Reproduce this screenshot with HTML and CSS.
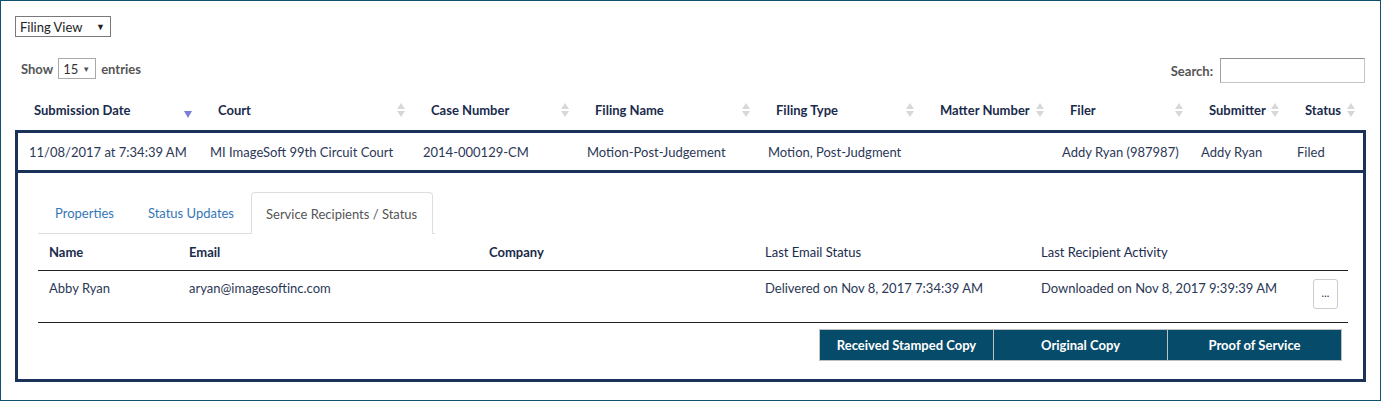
FILE: index.html
```html
<!DOCTYPE html>
<html>
<head>
<meta charset="utf-8">
<link rel="stylesheet" href="styles.css">
</head>
<body>
<div class="page">
  <div class="view-select">
    <span>Filing View</span>
    <span class="caret">&#9660;</span>
  </div>

  <div class="controls">
    <div class="length">
      <span>Show</span>
      <div class="len-select"><span>15</span><span class="caret small">&#9660;</span></div>
      <span>entries</span>
    </div>
    <div class="search">
      <span>Search:</span>
      <div class="search-input"></div>
    </div>
  </div>

  <div class="grid head">
    <div class="hc first"><span>Submission Date</span><svg class="sort-active" width="8" height="7" viewBox="0 0 8 7"><polygon points="0,0 8,0 4,7" fill="#7b7fd8"/></svg></div>
    <div class="hc"><span>Court</span><svg class="sort" width="8" height="14" viewBox="0 0 8 14"><polygon points="0,6 4,0 8,6" /><polygon points="0,8 8,8 4,14"/></svg></div>
    <div class="hc"><span>Case Number</span><svg class="sort" width="8" height="14" viewBox="0 0 8 14"><polygon points="0,6 4,0 8,6" /><polygon points="0,8 8,8 4,14"/></svg></div>
    <div class="hc"><span>Filing Name</span><svg class="sort" width="8" height="14" viewBox="0 0 8 14"><polygon points="0,6 4,0 8,6" /><polygon points="0,8 8,8 4,14"/></svg></div>
    <div class="hc"><span>Filing Type</span><svg class="sort" width="8" height="14" viewBox="0 0 8 14"><polygon points="0,6 4,0 8,6" /><polygon points="0,8 8,8 4,14"/></svg></div>
    <div class="hc"><span>Matter Number</span><svg class="sort" width="8" height="14" viewBox="0 0 8 14"><polygon points="0,6 4,0 8,6" /><polygon points="0,8 8,8 4,14"/></svg></div>
    <div class="hc"><span>Filer</span><svg class="sort" width="8" height="14" viewBox="0 0 8 14"><polygon points="0,6 4,0 8,6" /><polygon points="0,8 8,8 4,14"/></svg></div>
    <div class="hc"><span>Submitter</span><svg class="sort" width="8" height="14" viewBox="0 0 8 14"><polygon points="0,6 4,0 8,6" /><polygon points="0,8 8,8 4,14"/></svg></div>
    <div class="hc"><span>Status</span><svg class="sort" width="8" height="14" viewBox="0 0 8 14"><polygon points="0,6 4,0 8,6" /><polygon points="0,8 8,8 4,14"/></svg></div>
  </div>

  <div class="box">
    <div class="grid row">
      <div class="dc first">11/08/2017 at 7:34:39 AM</div>
      <div class="dc">MI ImageSoft 99th Circuit Court</div>
      <div class="dc">2014-000129-CM</div>
      <div class="dc">Motion-Post-Judgement</div>
      <div class="dc">Motion, Post-Judgment</div>
      <div class="dc"></div>
      <div class="dc">Addy Ryan (987987)</div>
      <div class="dc">Addy Ryan</div>
      <div class="dc">Filed</div>
    </div>

    <div class="detail">
      <div class="tabs">
        <div class="tab">Properties</div>
        <div class="tab">Status Updates</div>
        <div class="tab active">Service Recipients / Status</div>
      </div>

      <div class="rgrid rhead">
        <div class="rc b">Name</div>
        <div class="rc b">Email</div>
        <div class="rc b">Company</div>
        <div class="rc">Last Email Status</div>
        <div class="rc">Last Recipient Activity</div>
        <div class="rc"></div>
      </div>
      <div class="rgrid rrow">
        <div class="rc">Abby Ryan</div>
        <div class="rc">aryan@imagesoftinc.com</div>
        <div class="rc"></div>
        <div class="rc">Delivered on Nov 8, 2017 7:34:39 AM</div>
        <div class="rc">Downloaded on Nov 8, 2017 9:39:39 AM</div>
        <div class="rc"><div class="more">...</div></div>
      </div>

      <div class="actions">
        <div class="btn">Received Stamped Copy</div>
        <div class="btn">Original Copy</div>
        <div class="btn">Proof of Service</div>
      </div>
    </div>
  </div>
</div>
</body>
</html>
```

FILE: styles.css
```css
* { box-sizing: border-box; }
html, body { margin: 0; padding: 0; background: #fff; }
body {
  font-family: "Lato", "Open Sans", sans-serif;
  font-size: 13px;
  color: #2b3856;
}
.page {
  width: 1381px;
  height: 401px;
  border: 1px solid #0e5270;
  padding: 15px 0 0 14px;
}
.view-select {
  width: 96px;
  height: 21px;
  border: 1px solid #7a7a7a;
  display: flex;
  align-items: center;
  justify-content: space-between;
  padding: 0 5px 0 4px;
  color: #222;
  font-size: 13px;
}
.caret { font-size: 9px; color: #222; }
.caret.small { font-size: 8px; color: #555; }

.controls {
  display: flex;
  justify-content: space-between;
  align-items: flex-start;
  margin-top: 21px;
  padding-right: 15px;
}
.length {
  display: flex;
  align-items: center;
  gap: 5px;
  height: 21px;
  padding-left: 6px;
  font-weight: 700;
  color: #555;
}
.len-select {
  width: 38px;
  height: 21px;
  border: 1px solid #aaa;
  display: flex;
  align-items: center;
  justify-content: space-between;
  padding: 0 5px 0 4px;
  color: #333;
  font-weight: 400;
}
.search {
  display: flex;
  align-items: center;
  gap: 7px;
  font-weight: 700;
  color: #555;
}
.search-input {
  width: 145px;
  height: 25px;
  border: 1px solid #c4c4c4;
  border-top-color: #8e8e8e;
  border-left-color: #a0a0a0;
}

.grid {
  display: grid;
  grid-template-columns: 182px 213px 164px 181px 164px 130px 139px 96px 76px;
}
.head {
  width: 1351px;
  height: 40px;
  margin-top: 7px;
  padding-left: 3px;
}
.hc {
  display: flex;
  align-items: center;
  padding-left: 18px;
  padding-right: 8px;
  font-weight: 700;
  color: #1a2b4c;
}
.hc.first { padding-left: 16px; }
.hc span { flex: 1; white-space: nowrap; }
.hc .sort { fill: #d8d8d8; flex: none; }
.hc .sort-active { flex: none; margin-top: 8px; }

.box {
  width: 1351px;
  border: 3px solid #1b3358;
}
.row {
  height: 40px;
  border-bottom: 3px solid #1b3358;
  align-items: center;
}
.dc { padding-left: 10px; white-space: nowrap; }
.dc.first { padding-left: 11px; }

.detail {
  padding: 19px 15px 18px 20px;
}
.tabs {
  display: inline-flex;
  border-bottom: 1px solid #ddd;
  height: 42px;
  align-items: stretch;
}
.tab {
  padding: 0 14px 0 16px;
  margin-right: 2px;
  display: flex;
  align-items: center;
  color: #3577b6;
  border: 1px solid transparent;
  border-bottom: none;
  border-radius: 4px 4px 0 0;
}
.tab.active {
  color: #555;
  border-color: #ddd;
  background: #fff;
  margin-bottom: -1px;
  padding: 0 15px 0 14px;
}
.rgrid {
  display: grid;
  grid-template-columns: 140px 300px 276px 276px 272px 46px;
  width: 1310px;
}
.rhead {
  height: 37px;
  border-bottom: 1px solid #222;
  align-items: center;
  padding-bottom: 1px;
}
.rc { padding-left: 11px; white-space: nowrap; }
.rc.b { font-weight: 700; color: #1a2b4c; }
.rhead .rc { color: #1a2b4c; }
.rrow {
  height: 52px;
  border-bottom: 1px solid #222;
  padding-top: 9px;
}
.more {
  width: 25px;
  height: 30px;
  margin-top: -1px;
  border: 1px solid #ccc;
  border-radius: 3px;
  display: flex;
  justify-content: center;
  align-items: flex-end;
  padding-bottom: 9px;
  font-size: 11px;
  color: #333;
}
.actions {
  display: flex;
  justify-content: flex-end;
  padding-right: 6px;
  margin-top: 6px;
  width: 1310px;
}
.btn {
  width: 175px;
  height: 32px;
  background: #074b6a;
  border: 1px solid #c0c0c0;
  color: #fff;
  display: flex;
  align-items: center;
  justify-content: center;
  font-weight: 700;
  margin-left: -1px;
}
```
